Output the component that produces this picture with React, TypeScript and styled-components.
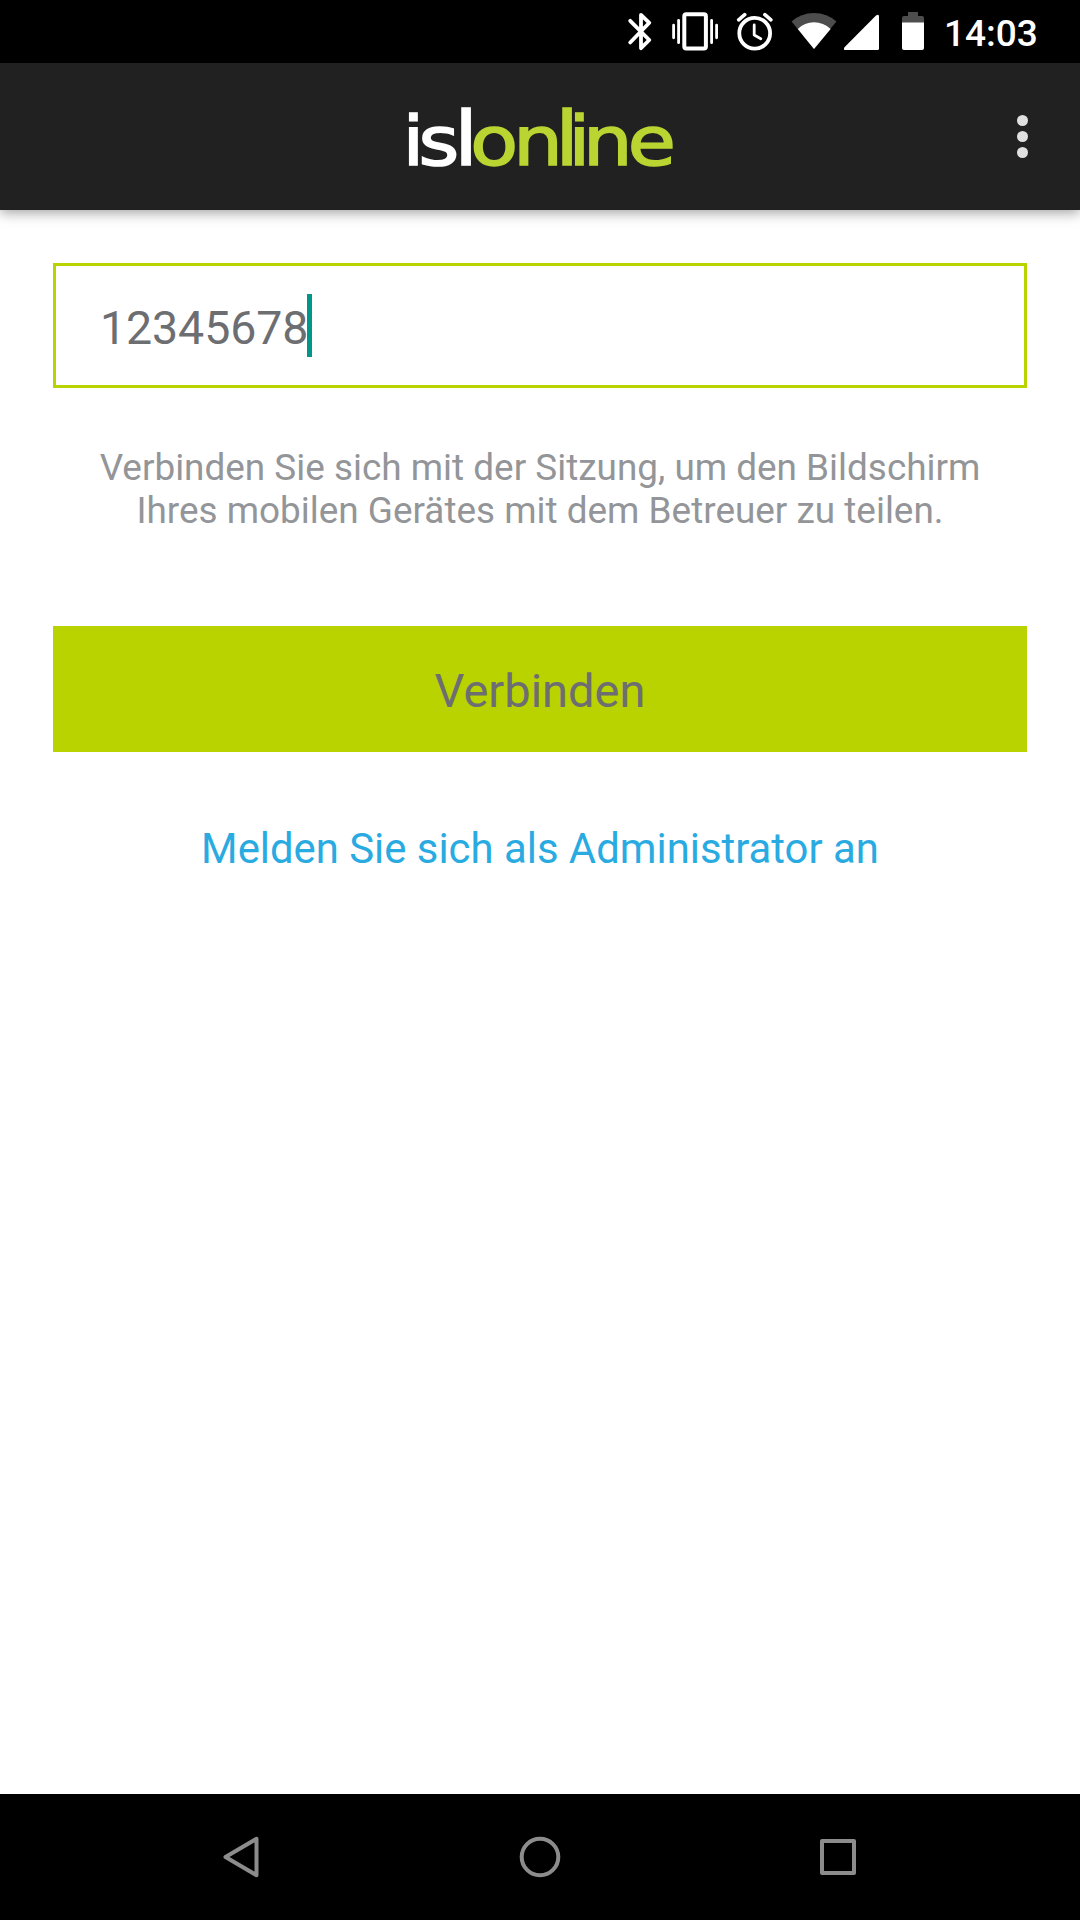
import React from "react";
import styled, { createGlobalStyle } from "styled-components";

const Global = createGlobalStyle`
  * { box-sizing: border-box; }
  body { margin: 0; background: #fff; font-family: Roboto, "Liberation Sans", sans-serif; }
`;

const Screen = styled.div`
  display: flex;
  flex-direction: column;
  width: 1080px;
  height: 1920px;
  overflow: hidden;
  background: #fff;
`;

const StatusBar = styled.div`
  display: flex;
  align-items: center;
  justify-content: flex-end;
  flex: none;
  height: 63px;
  padding-right: 43px;
  background: #000;
`;

const StatusIcon = styled.svg<{ $w: number; $gap: number }>`
  display: block;
  flex: none;
  width: ${(p) => p.$w}px;
  height: 63px;
  margin-right: ${(p) => p.$gap}px;
`;

const Clock = styled.div`
  width: 93px;
  font-size: 37px;
  font-weight: 500;
  line-height: 43px;
  padding-top: 3px;
  color: #fff;
  white-space: nowrap;
`;

const AppBar = styled.header`
  display: grid;
  grid-template-columns: 1fr 284px 1fr;
  align-items: center;
  flex: none;
  height: 147px;
  background: #212121;
  box-shadow: 0 3px 12px rgba(0, 0, 0, 0.36);
`;

const Logo = styled.svg`
  display: block;
  grid-column: 2;
  width: 284px;
  height: 110px;
  overflow: visible;
  font-family: "DejaVu Sans", sans-serif;
  font-size: 68px;
  font-weight: 400;
  stroke-width: 1.6px;
`;

const Tall = styled.tspan`
  font-size: 75.5px;
`;

const MenuButton = styled.button`
  display: flex;
  flex-direction: column;
  align-items: center;
  justify-self: end;
  gap: 5px;
  width: 115px;
  padding: 0;
  border: 0;
  background: none;
`;

const Dot = styled.i`
  width: 11px;
  height: 11px;
  border-radius: 50%;
  background: #e0e0e0;
`;

const Content = styled.main`
  display: flex;
  flex-direction: column;
  flex: 1;
  padding: 53px 53px 0;
`;

const CodeField = styled.div`
  display: flex;
  align-items: center;
  height: 125px;
  padding-left: 44px;
  border: 3px solid #b9d300;
  color: #6d6e71;
  font-size: 46.5px;
  line-height: 63px;
`;

const Code = styled.span`
  padding-top: 5px;
  letter-spacing: -0.1px;
`;

const Caret = styled.span`
  width: 5px;
  height: 63px;
  margin-left: -1px;
  background: #009688;
`;

const Hint = styled.p`
  margin: 58px 0 0;
  color: #939598;
  font-size: 36.9px;
  line-height: 43px;
  text-align: center;
`;

const ConnectButton = styled.button`
  height: 126px;
  margin-top: 94px;
  padding: 4px 0 0;
  border: 0;
  background: #b9d300;
  color: #6d6e71;
  font-family: inherit;
  font-size: 47px;
  line-height: 56px;
`;

const AdminLink = styled.a`
  margin-top: 72px;
  color: #29abe2;
  font-size: 41.85px;
  line-height: 50px;
  text-align: center;
`;

const NavBar = styled.nav`
  display: flex;
  align-items: center;
  justify-content: center;
  gap: 250px;
  flex: none;
  height: 126px;
  background: #000;
`;

const NavIcon = styled.svg`
  display: block;
  width: 48px;
  height: 48px;
  fill: none;
  stroke: #8c8c8c;
  stroke-width: 4px;
  stroke-linejoin: round;
`;

export default function App() {
  return (
    <>
      <Global />
      <Screen>
        <StatusBar>
          <StatusIcon $w={28} $gap={17} viewBox="627 0 28 63" fill="none" stroke="#fff" strokeWidth="3.8" strokeLinecap="round" strokeLinejoin="round">
            <path d="M630.2 20.8L649.3 40L641 48.2V14.8L649.3 22.8L630.2 42.5" />
          </StatusIcon>
          <StatusIcon $w={46} $gap={18} viewBox="672 0 46 63" fill="none" stroke="#fff">
            <rect x="684.3" y="14.3" width="21.6" height="34.2" rx="2" strokeWidth="4" />
            <path d="M673.6 25.2V37.8M678.6 20.3V42.7M711.6 20.3V42.7M716.6 25.2V37.8" strokeWidth="2.8" strokeLinecap="round" />
          </StatusIcon>
          <StatusIcon $w={38} $gap={17} viewBox="736 0 38 63" fill="none" stroke="#fff" strokeLinecap="round" strokeLinejoin="round">
            <circle cx="754.7" cy="33.3" r="15.4" strokeWidth="3.8" />
            <path d="M754.2 25V35L760.8 38.8" strokeWidth="2.8" />
            <path d="M738.7 19.8L744.7 14.7M764.9 14.7L770.9 19.8" strokeWidth="3.6" />
          </StatusIcon>
          <StatusIcon $w={46} $gap={7} viewBox="791 0 46 63">
            <path d="M791.6 21.5Q801 13 814 13T836.4 21.5L814 49Z" fill="#4d4d4d" />
            <path d="M797.8 29Q804.5 22.3 814 22.3T830.6 29L814 49Z" fill="#fff" />
          </StatusIcon>
          <StatusIcon $w={36} $gap={22} viewBox="844 0 36 63" fill="#fff">
            <path d="M844.5 47.2L876 15.6Q879 13.4 879 16.5V48.5Q879 50 877.5 50H845.5Q842.8 50 844.5 47.2Z" />
          </StatusIcon>
          <StatusIcon $w={22} $gap={20} viewBox="902 0 22 63">
            <path d="M908 12H918V16H922Q924 16 924 18V23H902V18Q902 16 904 16H908Z" fill="#4d4d4d" />
            <path d="M902 22.5H924V48Q924 50 922 50H904Q902 50 902 48Z" fill="#fff" />
          </StatusIcon>
          <Clock>14:03</Clock>
        </StatusBar>
        <AppBar>
          <Logo viewBox="-10 0 284 110" aria-label="islonline">
            <text y="83" transform="scale(1.15 1)">
              <tspan fill="#fff" stroke="#fff">
                <tspan x="-4.8 9.1">is</tspan>
                <Tall x="40.1">l</Tall>
              </tspan>
              <tspan fill="#bad532" stroke="#bad532">
                <tspan x="54.1 91.6">on</tspan>
                <Tall x="127.9">l</Tall>
                <tspan x="139.6 152.1 191">ine</tspan>
              </tspan>
            </text>
          </Logo>
          <MenuButton aria-label="Menü">
            <Dot />
            <Dot />
            <Dot />
          </MenuButton>
        </AppBar>
        <Content>
          <CodeField>
            <Code>12345678</Code>
            <Caret />
          </CodeField>
          <Hint>
            Verbinden Sie sich mit der Sitzung, um den Bildschirm
            <br />
            Ihres mobilen Gerätes mit dem Betreuer zu teilen.
          </Hint>
          <ConnectButton>Verbinden</ConnectButton>
          <AdminLink>Melden Sie sich als Administrator an</AdminLink>
        </Content>
        <NavBar>
          <NavIcon viewBox="0 0 48 48">
            <path d="M7.5 24L38.5 5.8V42.2Z" />
          </NavIcon>
          <NavIcon viewBox="0 0 48 48">
            <circle cx="24" cy="24" r="18.3" />
          </NavIcon>
          <NavIcon viewBox="0 0 48 48">
            <rect x="8" y="8" width="32" height="32" />
          </NavIcon>
        </NavBar>
      </Screen>
    </>
  );
}
